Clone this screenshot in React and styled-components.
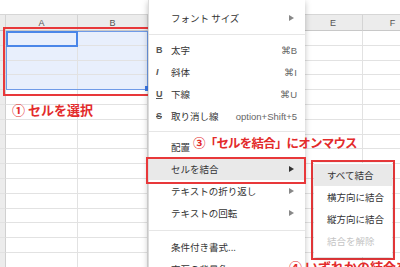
import React from 'react';
import styled, { createGlobalStyle } from 'styled-components';

const GlobalStyles = createGlobalStyle`
  html, body {
    margin: 0;
    padding: 0;
    background: #fff;
    font-family: 'Noto Sans CJK JP', 'Liberation Sans', sans-serif;
  }
`;

const Screen = styled.div`
  position: relative;
  width: 400px;
  height: 267px;
  overflow: hidden;
  background: #fff;
`;

const TopBar = styled.div`
  height: 14px;
  background: #fff;
`;

const COLS = '6px 72px 70px 78px 78px 59px 60px';

const Grid = styled.div`
  display: grid;
  grid-template-columns: ${COLS};
  grid-auto-rows: 14.8px;
`;

const HeaderRow = styled.div`
  display: grid;
  grid-template-columns: ${COLS};
  height: 17px;
  background: #ececec;
  border-top: 1px solid #d6d6d6;
  box-sizing: border-box;
`;

const HeadCell = styled.div`
  border-right: 1px solid #d4d4d4;
  border-bottom: 1px solid #c8c8c8;
  display: flex;
  align-items: center;
  justify-content: center;
  font-family: 'Liberation Sans', sans-serif;
  font-size: 9px;
  color: #555;
`;

const Cell = styled.div`
  box-sizing: border-box;
  border-right: 1px solid ${p => (p.$rowHead ? '#d0d0d0' : '#e2e2e2')};
  border-bottom: 1px solid #e2e2e2;
  background: ${p => (p.$rowHead ? '#ececec' : p.$selected ? '#e8effc' : '#fff')};
`;

const Selection = styled.div`
  position: absolute;
  left: 6px;
  top: 31px;
  width: 142px;
  height: 59px;
  box-sizing: border-box;
  border: 1px solid #6f9be8;
`;

const ActiveCell = styled.div`
  position: absolute;
  left: 6px;
  top: 31px;
  width: 72px;
  height: 16px;
  box-sizing: border-box;
  border: 2px solid #4a86e8;
`;

const FillHandle = styled.div`
  position: absolute;
  left: 145px;
  top: 86px;
  width: 4px;
  height: 5px;
  background: #3b78e7;
`;

const RedBox = styled.div`
  position: absolute;
  left: ${p => p.$x}px;
  top: ${p => p.$y}px;
  width: ${p => p.$w}px;
  height: ${p => p.$h}px;
  box-sizing: border-box;
  border: 2px solid #e8383a;
`;

const Note = styled.div`
  position: absolute;
  left: ${p => p.$x}px;
  top: ${p => p.$y}px;
  color: #e32b2b;
  font-family: 'Noto Sans CJK JP', sans-serif;
  font-weight: 700;
  font-size: ${p => p.$size || 13}px;
  letter-spacing: ${p => p.$ls || 0}px;
  line-height: 1;
  white-space: nowrap;
`;

const Menu = styled.div`
  position: absolute;
  left: 148px;
  top: 0;
  width: 157px;
  height: 290px;
  padding-top: 7px;
  box-sizing: border-box;
  background: #fff;
  box-shadow: 0 2px 6px rgba(0, 0, 0, 0.25);
  border-left: 1px solid #dcdcdc;
  display: flex;
  flex-direction: column;
`;

const Item = styled.div`
  height: 22px;
  flex: none;
  display: flex;
  align-items: center;
  padding: 0 8px 0 7px;
  background: ${p => (p.$active ? '#e9e9e9' : 'transparent')};
  color: ${p => (p.$disabled ? '#c4c4c4' : '#333')};
  font-size: 9.5px;
  white-space: nowrap;
`;

const IconSlot = styled.span`
  width: 15px;
  flex: none;
  font-family: 'Liberation Sans', sans-serif;
  font-size: 9px;
  font-weight: 700;
  color: #555;
`;

const Label = styled.span`
  flex: 1;
  white-space: nowrap;
`;

const Shortcut = styled.span`
  font-family: 'Liberation Sans', sans-serif;
  font-size: 9.5px;
  color: #666;
`;

const Arrow = styled.span`
  width: 0;
  height: 0;
  margin-right: 3px;
  border-top: 3px solid transparent;
  border-bottom: 3px solid transparent;
  border-left: 5px solid ${p => (p.$dark ? '#333' : '#888')};
`;

const Separator = styled.div`
  flex: none;
  height: ${p => p.$h || 10}px;
  display: flex;
  align-items: center;
  &::after {
    content: '';
    flex: 1;
    height: 1px;
    background: #e6e6e6;
  }
`;

const SubWrap = styled.div`
  position: absolute;
  left: 311px;
  top: 160px;
  width: 84px;
  height: 100px;
  box-sizing: border-box;
  border: 2px solid #e8383a;
  padding: 1px;
`;

const SubMenu = styled.div`
  height: 100%;
  background: #fff;
  box-shadow: 0 1px 4px rgba(0, 0, 0, 0.2);
  padding-top: 1px;
  box-sizing: border-box;
  display: flex;
  flex-direction: column;
`;

const SubItem = styled(Item)`
  padding: 0 0 0 13px;
`;

const StrikeS = styled.span`
  text-decoration: line-through;
`;

// C and D sit under the open menu
const colHeads = ['', 'A', 'B', '', '', 'E', 'F'];

function Sheet() {
  const rows = [];
  for (let r = 0; r < 17; r++) {
    for (let c = 0; c < colHeads.length; c++) {
      rows.push(
        <Cell
          key={`${r}-${c}`}
          $rowHead={c === 0}
          $selected={r < 4 && (c === 1 || c === 2)}
        />
      );
    }
  }
  return (
    <>
      <TopBar />
      <HeaderRow>
        {colHeads.map((h, i) => (
          <HeadCell key={i}>{h}</HeadCell>
        ))}
      </HeaderRow>
      <Grid>{rows}</Grid>
    </>
  );
}

export default function App() {
  return (
    <>
      <GlobalStyles />
      <Screen>
        <Sheet />
        <Selection />
        <ActiveCell />
        <FillHandle />
        <RedBox $x={3} $y={27} $w={148} $h={69} />
        <Note $x={12} $y={103}>① セルを選択</Note>

        <Menu>
          <Item>
            <IconSlot />
            <Label>フォント サイズ</Label>
            <Arrow />
          </Item>
          <Separator $h={10} />
          <Item>
            <IconSlot>B</IconSlot>
            <Label>太字</Label>
            <Shortcut>⌘B</Shortcut>
          </Item>
          <Item>
            <IconSlot style={{ fontStyle: 'italic' }}>I</IconSlot>
            <Label>斜体</Label>
            <Shortcut>⌘I</Shortcut>
          </Item>
          <Item>
            <IconSlot style={{ textDecoration: 'underline' }}>U</IconSlot>
            <Label>下線</Label>
            <Shortcut>⌘U</Shortcut>
          </Item>
          <Item>
            <IconSlot><StrikeS>S</StrikeS></IconSlot>
            <Label>取り消し線</Label>
            <Shortcut>option+Shift+5</Shortcut>
          </Item>
          <Separator $h={9} />
          <Item>
            <IconSlot />
            <Label>配置</Label>
          </Item>
          <Item $active>
            <IconSlot />
            <Label>セルを結合</Label>
            <Arrow $dark />
          </Item>
          <Item>
            <IconSlot />
            <Label>テキストの折り返し</Label>
            <Arrow />
          </Item>
          <Item>
            <IconSlot />
            <Label>テキストの回転</Label>
            <Arrow />
          </Item>
          <Separator $h={12} />
          <Item>
            <IconSlot />
            <Label>条件付き書式...</Label>
          </Item>
          <Item>
            <IconSlot />
            <Label>交互の背景色</Label>
          </Item>
        </Menu>

        <RedBox $x={146} $y={157} $w={160} $h={27} />

        <SubWrap>
          <SubMenu>
            <SubItem $active>すべて結合</SubItem>
            <SubItem>横方向に結合</SubItem>
            <SubItem>縦方向に結合</SubItem>
            <SubItem $disabled>結合を解除</SubItem>
          </SubMenu>
        </SubWrap>

        <Note $x={193} $y={137} $size={12.5} $ls={-0.8}>③「セルを結合」にオンマウス</Note>
        <Note $x={289} $y={260}>④ いずれかの結合を選択</Note>
      </Screen>
    </>
  );
}
